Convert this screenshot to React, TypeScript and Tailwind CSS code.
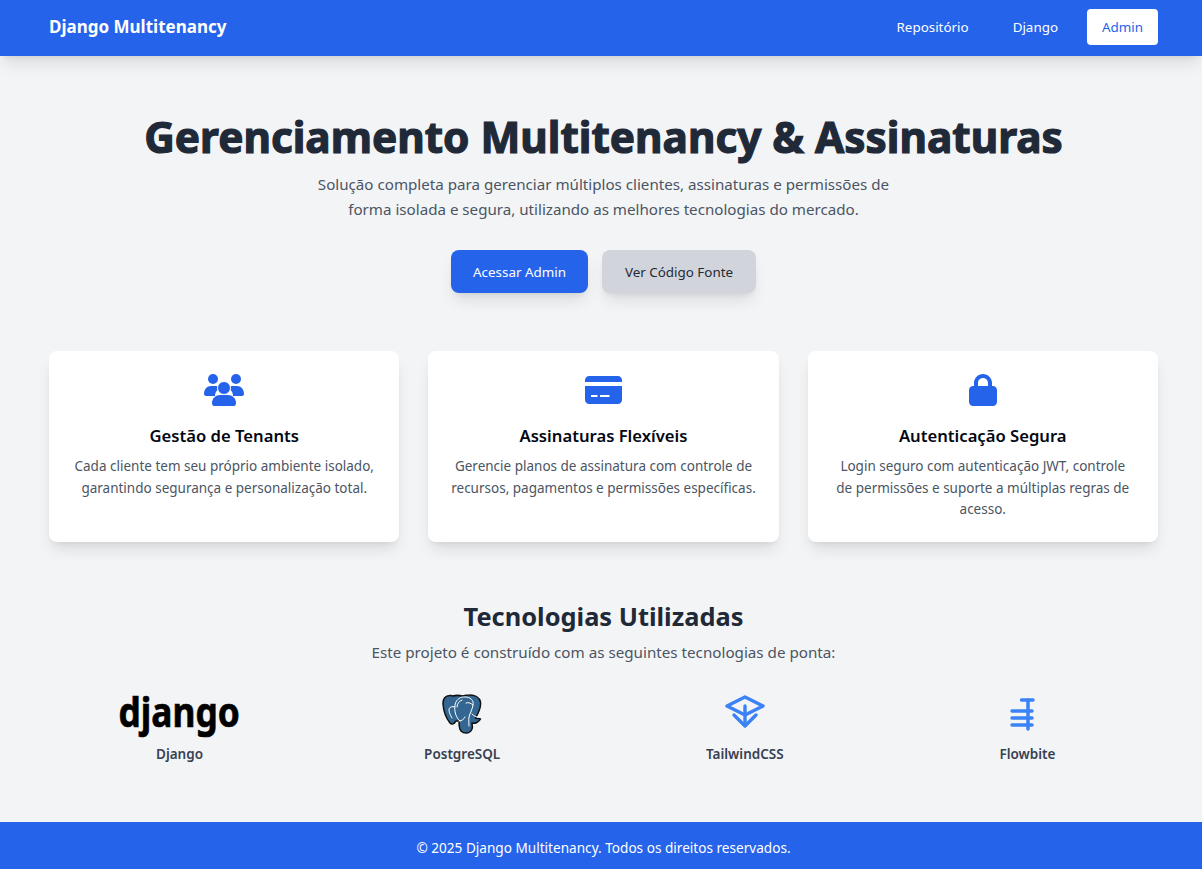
import { FaLock } from "react-icons/fa6";

const font = { fontFamily: '"Noto Sans", sans-serif' };

function UsersIcon() {
  return (
    <svg viewBox="0 0 40 32" fill="#2563eb" className="mx-auto w-10 h-8">
      <circle cx="9" cy="5" r="5" />
      <circle cx="32" cy="5" r="5" />
      <path d="M0 20c0-5 3-8 7-8h5c2 0 3 1 4 2-3 2-5 4-5 8H2c-1 0-2-1-2-2z" />
      <path d="M40 20c0-5-3-8-7-8h-5c-2 0-3 1-4 2 3 2 5 4 5 8h9c1 0 2-1 2-2z" />
      <circle cx="20" cy="14" r="6.500" stroke="#fff" strokeWidth="1" />
      <path d="M8 29c0-5 4-8 8-8h8c4 0 8 3 8 8 0 2-1 3-2 3H10c-1 0-2-1-2-3z" />
    </svg>
  );
}

function CardIcon() {
  return (
    <div className="h-8 flex items-center justify-center">
      <svg viewBox="0 0 37 28" className="w-[37px] h-7">
        <path d="M0 6V4c0-2 2-4 4-4h29c2 0 4 2 4 4v2z" fill="#2563eb" />
        <path d="M0 10h37v14c0 2-2 4-4 4H4c-2 0-4-2-4-4z" fill="#2563eb" />
        <rect x="6" y="19" width="6.500" height="2" fill="#fff" />
        <rect x="15" y="19" width="9.500" height="2" fill="#fff" />
      </svg>
    </div>
  );
}

const features = [
  {
    icon: <UsersIcon />,
    title: "Gestão de Tenants",
    desc: <>Cada cliente tem seu próprio ambiente isolado, garantindo segurança e personalização total.</>,
  },
  {
    icon: <CardIcon />,
    title: "Assinaturas Flexíveis",
    desc: <>Gerencie planos de assinatura com controle de recursos, pagamentos e permissões específicas.</>,
  },
  {
    icon: <FaLock className="mx-auto text-[#2563eb] w-10 h-8" />,
    title: "Autenticação Segura",
    desc: <>Login seguro com autenticação JWT, controle<br />de permissões e suporte a múltiplas regras de acesso.</>,
  },
];

function PostgresLogo() {
  return (
    <svg viewBox="0 0 40 42" className="mt-px w-[40px] h-[42px]">
      <path
        d="M9 1.500C3 1 .8 5 1 10c.5 6 3 14 7 19 2 2 4 1 6-2l3 0c0 3 0 8 2 10 3 3 9 3 11-2 1-2 0-4 0-6 3 1 7-1 8.500-4-1-1-4 0-5-1 3-5 5.500-12 5-16-1-5-6-7.200-11-7-3 0-5 .5-7 1-4-1-8-.5-10 0z"
        fill="#336791"
        stroke="#111"
        strokeWidth="1.500"
        strokeLinejoin="round"
      />
      <path
        d="M18 27c-4-3-6-10-5-16 1-6 6-8.500 10-8 5 0 9 3 8 8-.5 4-3 8-4 12-.5 3 0 6 0 9M20 6c-3 1-5 4-5 7M31 11c-2-2-5-3-7-2M13 13c-3-1-6 0-6 3 0 3 2 6 3 8M30 20c2 2 4 3 6 3M17 27c3 0 5-2 6-4"
        fill="none"
        stroke="#fff"
        strokeWidth="1"
        strokeLinecap="round"
      />
    </svg>
  );
}

function TailwindLogo() {
  return (
    <svg viewBox="0 0 40 34" fill="none" stroke="#3b82f6" strokeWidth="3.400" strokeLinecap="round" strokeLinejoin="round" className="mt-[2px] w-[40px] h-[34px]">
      <path d="M20 2 38 11 20 20 2 11Z" />
      <path d="M20 11V30" />
      <path d="M9 20 20 31 31 20" />
    </svg>
  );
}

function FlowbiteLogo() {
  return (
    <svg viewBox="0 0 28 36" fill="none" stroke="#3b82f6" strokeWidth="3.500" strokeLinecap="round" className="mt-[3px] mr-[10px] w-[28px] h-[36px]">
      <path d="M13.500 4H25" />
      <path d="M20 4V33" />
      <path d="M4 15H24" />
      <path d="M4 22H24" />
      <path d="M4 29H24" />
    </svg>
  );
}

export default function App() {
  return (
    <div className="min-h-screen flex flex-col bg-[#f3f4f6]" style={font}>
      {/* Navbar */}
      <nav className="h-14 bg-[#2563eb] shadow-lg pl-[49px] pr-[44px] pb-[2px] flex items-center justify-between relative">
        <span className="text-white font-bold text-[17px]">Django Multitenancy</span>
        <div className="flex items-center text-[13.4px]">
          <a className="text-white px-[15px]">Repositório</a>
          <a className="text-white px-[15px] ml-[14px]">Django</a>
          <a className="ml-[14px] bg-white text-[#2563eb] rounded h-9 w-[71px] flex items-center justify-center">Admin</a>
        </div>
      </nav>

      <main className="flex-1 pl-[49px] pr-[44px]">
        {/* Hero */}
        <section className="pt-[52px] text-center">
          <h1 className="text-[42.300px] font-bold text-[#1f2937] leading-[58px] [-webkit-text-stroke:1.2px_#1f2937]">Gerenciamento Multitenancy &amp; Assinaturas</h1>
          <p className="mt-[6px] text-[15.150px] text-[#4b5563] leading-[25px] w-[600px] mx-auto">
            Solução completa para gerenciar múltiplos clientes, assinaturas e permissões de forma isolada e segura, utilizando as melhores tecnologias do mercado.
          </p>
          <div className="mt-[28px] flex justify-center gap-[14px] text-[13.4px]">
            <a className="h-[43px] w-[137px] pt-px rounded-lg bg-[#2563eb] text-white shadow-lg flex items-center justify-center">Acessar Admin</a>
            <a className="h-[43px] w-[154px] pt-px rounded-lg bg-[#d1d5db] text-[#1f2937] shadow-lg flex items-center justify-center">Ver Código Fonte</a>
          </div>
        </section>

        {/* Features */}
        <section className="mt-[58px] grid grid-cols-3 gap-[28.8px]">
          {features.map((f) => (
            <div key={f.title} className="h-[191px] bg-white rounded-lg shadow-lg px-[22px] pt-[23px] text-center">
              {f.icon}
              <h3 className="mt-[16px] text-[16.650px] font-semibold text-[#030712] leading-7">{f.title}</h3>
              <p className="mt-[6px] text-[13.500px] text-[#4b5563] leading-[21.5px]">{f.desc}</p>
            </div>
          ))}
        </section>

        {/* Tecnologias */}
        <section className="mt-[56px] text-center">
          <h2 className="text-[25.400px] font-bold text-[#1f2937] leading-9">Tecnologias Utilizadas</h2>
          <p className="mt-[6px] text-[#4b5563] text-[15.200px] leading-6">Este projeto é construído com as seguintes tecnologias de ponta:</p>
          <div className="mt-[29px] grid grid-cols-4 gap-[21.6px]">
            <div className="flex flex-col items-center">
              <div className="h-[50px] flex items-start justify-center">
                <span className="inline-block scale-x-[0.84] text-[42px] font-bold text-black leading-[35px] [-webkit-text-stroke:0.7px_#000]">django</span>
              </div>
              <span className="mt-px text-[13.500px] font-semibold text-[#374151]">Django</span>
            </div>
            <div className="flex flex-col items-center">
              <div className="h-[50px] flex items-start justify-center"><PostgresLogo /></div>
              <span className="mt-px text-[13.500px] font-semibold text-[#374151]">PostgreSQL</span>
            </div>
            <div className="flex flex-col items-center">
              <div className="h-[50px] flex items-start justify-center"><TailwindLogo /></div>
              <span className="mt-px text-[13.500px] font-semibold text-[#374151]">TailwindCSS</span>
            </div>
            <div className="flex flex-col items-center">
              <div className="h-[50px] flex items-start justify-center"><FlowbiteLogo /></div>
              <span className="mt-px text-[13.500px] font-semibold text-[#374151]">Flowbite</span>
            </div>
          </div>
        </section>
      </main>

      <footer className="h-[47px] bg-[#2563eb] text-white text-[13.600px] pl-[49px] pr-[44px] pt-[5px] flex items-center justify-center">
        © 2025 Django Multitenancy. Todos os direitos reservados.
      </footer>
    </div>
  );
}
